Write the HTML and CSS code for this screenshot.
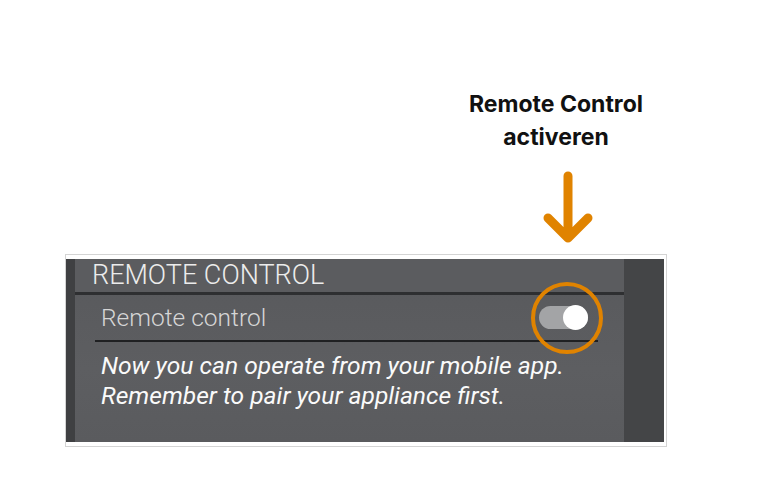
FILE: index.html
```html
<!DOCTYPE html>
<html lang="en">
<head>
  <meta charset="UTF-8" />
  <title>Remote Control activeren</title>
  <link rel="stylesheet" href="styles.css">
</head>
<body>

  <div class="callout">
    <div class="callout-title">Remote Control<br>activeren</div>
    <svg class="callout-arrow" width="60" height="80" viewBox="0 0 60 80">
      <path d="M29 6 V68 M9 48 L29 68 L49 48" fill="none" stroke="#e08300" stroke-width="9" stroke-linecap="round" stroke-linejoin="round"/>
    </svg>
  </div>

  <div class="shot">
    <div class="panel">
      <div class="panel-strip"></div>
      <div class="panel-main">
        <div class="panel-header">REMOTE CONTROL</div>
        <div class="setting-row">
          <span class="setting-label">Remote control</span>
          <span class="toggle on"><span class="toggle-knob"></span></span>
          <span class="highlight-ring"></span>
        </div>
        <p class="setting-desc">Now you can operate from your mobile app.<br>Remember to pair your appliance first.</p>
      </div>
      <div class="panel-side"></div>
    </div>
  </div>

</body>
</html>
```

FILE: styles.css
```css
    body {
      margin: 0;
      background: #fff;
      font-family: "Inter", "Lato", sans-serif;
    }
    .callout {
      display: flex;
      flex-direction: column;
      align-items: center;
      width: 200px;
      margin-left: 456px;
      padding-top: 88px;
    }
    .callout-title {
      font-size: 23px;
      font-weight: 700;
      line-height: 33px;
      text-align: center;
      color: #111;
    }
    .callout-arrow {
      display: block;
      margin-top: 16px;
      margin-left: 26px;
    }
    .shot {
      width: 598px;
      margin-left: 65px;
      margin-top: 4px;
      padding: 4px 2px 4px 0;
      border: 1px solid #d4d4d4;
      background: #fff;
    }
    .panel {
      display: grid;
      grid-template-columns: 9px 1fr 40px;
      height: 183px;
      background: linear-gradient(180deg, #58595c 0%, #5d5e61 60%, #5a5b5e 100%);
      font-family: "Roboto", "Liberation Sans", sans-serif;
    }
    .panel-strip {
      background: #3f4042;
    }
    .panel-side {
      background: #444547;
    }
    .panel-main {
      display: flex;
      flex-direction: column;
    }
    .panel-header {
      height: 33px;
      padding-left: 17px;
      font-size: 27px;
      font-weight: 300;
      line-height: 33px;
      color: #ececec;
      border-bottom: 3px solid #2e2f31;
      background: #5b5c5f;
    }
    .setting-row {
      position: relative;
      display: flex;
      align-items: center;
      justify-content: space-between;
      height: 45px;
      margin-left: 20px;
      margin-right: 26px;
      padding-left: 6px;
      border-bottom: 2px solid #1f2022;
    }
    .setting-label {
      font-size: 24.5px;
      font-weight: 300;
      color: #d6d6d6;
    }
    .toggle {
      position: relative;
      width: 49px;
      height: 23px;
      margin-right: 10px;
      border-radius: 12px;
      background: #a3a4a6;
    }
    .toggle-knob {
      position: absolute;
      top: -1px;
      right: 0;
      width: 25px;
      height: 25px;
      border-radius: 50%;
      background: #fff;
    }
    .highlight-ring {
      position: absolute;
      left: 436px;
      top: -13px;
      width: 64px;
      height: 64px;
      border: 4px solid #e08300;
      border-radius: 50%;
    }
    .setting-desc {
      margin: 9px 0 0 26px;
      font-size: 24.6px;
      font-style: italic;
      line-height: 30px;
      color: #fafafa;
    }
```
